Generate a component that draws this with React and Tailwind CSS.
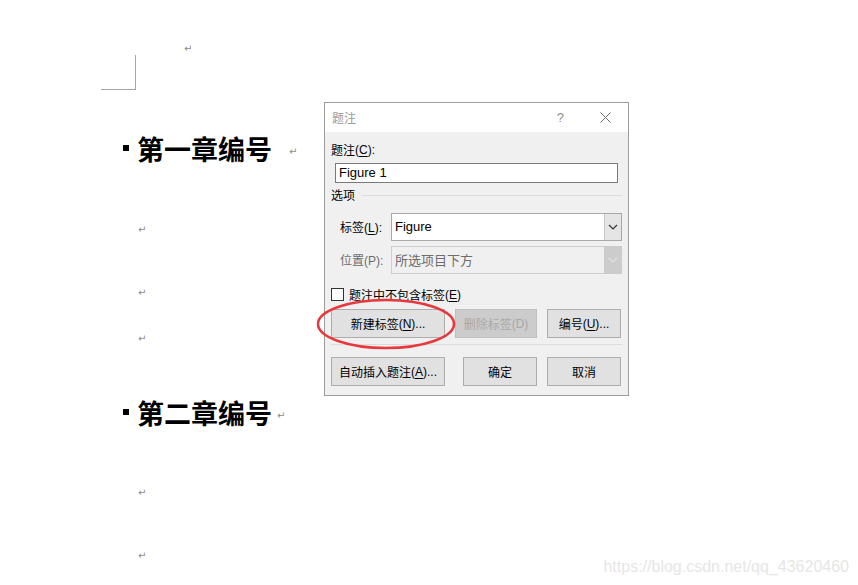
import React from "react"

const ui = { fontFamily: '"Liberation Sans", "Noto Sans CJK SC", sans-serif' }
const cjk = { fontFamily: '"Noto Sans CJK SC", "Liberation Sans", sans-serif' }

function Ret({ className = "" }) {
  return (
    <span className={"text-[10px] leading-none text-[#8a8a8a] " + className} style={{ fontFamily: '"DejaVu Sans", sans-serif' }}>
      ↵
    </span>
  )
}

function Heading({ text, gap }) {
  return (
    <div className="flex h-[30px] items-center pl-[123px]">
      <span className="h-[6px] w-[6px] bg-black" />
      <span className="ml-[8px] text-[27px] font-bold leading-none text-black" style={cjk}>
        {text}
      </span>
      <Ret className={"mt-[8px] " + gap} />
    </div>
  )
}

function Chevron({ color }) {
  return (
    <svg width="10" height="6" viewBox="0 0 10 6">
      <path d="M1 1 L5 5 L9 1" fill="none" stroke={color} strokeWidth="1.2" />
    </svg>
  )
}

function Btn({ children, w, disabled }) {
  return (
    <div
      className={
        "flex h-full items-center justify-center border text-[12px] " +
        w +
        (disabled ? " border-[#bfbfbf] bg-[#cccccc] text-[#a8a8a8]" : " border-[#adadad] bg-[#e1e1e1] text-black")
      }
    >
      {children}
    </div>
  )
}

function U({ children }) {
  return <span className="underline underline-offset-2">{children}</span>
}

export default function App() {
  return (
    <div className="relative h-[585px] w-[858px] overflow-hidden bg-white" style={ui}>
      {/* document */}
      <div className="flex items-start">
        <div className="ml-[101px] mt-[55px] h-[35px] w-[35px] border-b border-r border-[#a6a6a6]" />
        <Ret className="ml-[48px] mt-[44px]" />
      </div>
      <div className="mt-[43px]">
        <Heading text="第一章编号" gap="ml-[17px]" />
      </div>
      <div className="mt-[53px] h-[12px] pl-[138px]"><Ret /></div>
      <div className="mt-[51px] h-[12px] pl-[138px]"><Ret /></div>
      <div className="mt-[34px] h-[12px] pl-[138px]"><Ret /></div>
      <div className="mt-[60px]">
        <Heading text="第二章编号" gap="ml-[5px]" />
      </div>
      <div className="mt-[52px] h-[12px] pl-[138px]"><Ret /></div>
      <div className="mt-[51px] h-[12px] pl-[138px]"><Ret /></div>

      {/* dialog */}
      <div className="absolute left-[324px] top-[102px] flex h-[294px] w-[305px] flex-col border border-[#9c9c9c] bg-[#f0f0f0]">
        <div className="flex h-[29px] items-center bg-white pl-[7px]">
          <span className="text-[12px] text-[#9a9a9a]" style={cjk}>题注</span>
          <span className="ml-auto text-[13px] text-[#8c8c8c]">?</span>
          <svg className="ml-[36px] mr-[17px]" width="11" height="11" viewBox="0 0 11 11">
            <path d="M0.5 0.5 L10.5 10.5 M10.5 0.5 L0.5 10.5" stroke="#6f6f6f" strokeWidth="1" />
          </svg>
        </div>
        <div className="flex flex-col pl-[6px] pr-[6px] text-[12px] text-black">
          <div className="mt-[10px] flex h-[16px] items-center">
            <span style={cjk}>题注</span>(<U>C</U>):
          </div>
          <div className="ml-[4px] mt-[5px] flex h-[20px] w-[283px] items-center border border-[#7a7a7a] bg-white pl-[3px] text-[13px]">
            Figure 1
          </div>
          <div className="mt-[4px] flex h-[16px] items-center">
            <span style={cjk}>选项</span>
            <div className="ml-[7px] h-px flex-1 bg-[#dcdcdc]" />
          </div>
          <div className="mt-[10px] flex h-[28px] items-center">
            <div className="w-[60px] pl-[9px]">
              <span style={cjk}>标签</span>(<U>L</U>):
            </div>
            <div className="flex h-full flex-1 border border-[#a9a9a9] bg-white">
              <div className="flex flex-1 items-center pl-[3px] text-[13px]">Figure</div>
              <div className="flex w-[17px] items-center justify-center border-l border-[#c8c8c8] bg-[#e5e5e5]">
                <Chevron color="#333" />
              </div>
            </div>
          </div>
          <div className="mt-[5px] flex h-[28px] items-center text-[#6d6d6d]">
            <div className="w-[60px] pl-[9px]">
              <span style={cjk}>位置</span>(P):
            </div>
            <div className="flex h-full flex-1 border border-[#cccccc] bg-[#f0f0f0]">
              <div className="flex flex-1 items-center pl-[3px] text-[13px]" style={cjk}>所选项目下方</div>
              <div className="flex w-[17px] items-center justify-center bg-[#cccccc]">
                <Chevron color="#e2e2e2" />
              </div>
            </div>
          </div>
          <div className="mt-[14px] flex h-[13px] items-center">
            <div className="h-[13px] w-[13px] border border-[#333] bg-white" />
            <span className="ml-[5px]" style={cjk}>题注中不包含标签</span>(<U>E</U>)
          </div>
          <div className="mt-[8px] flex h-[29px]">
            <Btn w="w-[114px]">
              <span style={cjk}>新建标签</span>(<U>N</U>)...
            </Btn>
            <div className="ml-[10px]">
              <Btn w="w-[82px]" disabled>
                <span style={cjk}>删除标签</span>(D)
              </Btn>
            </div>
            <div className="ml-[10px] h-full">
              <Btn w="w-[74px]">
                <span style={cjk}>编号</span>(<U>U</U>)...
              </Btn>
            </div>
          </div>
          <div className="mt-[6px] h-px bg-[#dcdcdc]" />
          <div className="mt-[12px] flex h-[29px]">
            <Btn w="w-[114px]">
              <span style={cjk}>自动插入题注</span>(<U>A</U>)...
            </Btn>
            <div className="ml-[18px] h-full">
              <Btn w="w-[74px]"><span style={cjk}>确定</span></Btn>
            </div>
            <div className="ml-[10px] h-full">
              <Btn w="w-[74px]"><span style={cjk}>取消</span></Btn>
            </div>
          </div>
        </div>
      </div>

      {/* red annotation */}
      <svg className="absolute left-[314px] top-[297px]" width="146" height="56" viewBox="0 0 146 56">
        <ellipse cx="72" cy="27" rx="68" ry="24" fill="none" stroke="#e8383d" strokeWidth="2.5" />
      </svg>

      {/* watermark */}
      <div className="absolute right-[9px] top-[558px] text-[16px] leading-[18px] text-[#e6e6e6]">
        https://blog.csdn.net/qq_43620460
      </div>
    </div>
  )
}
